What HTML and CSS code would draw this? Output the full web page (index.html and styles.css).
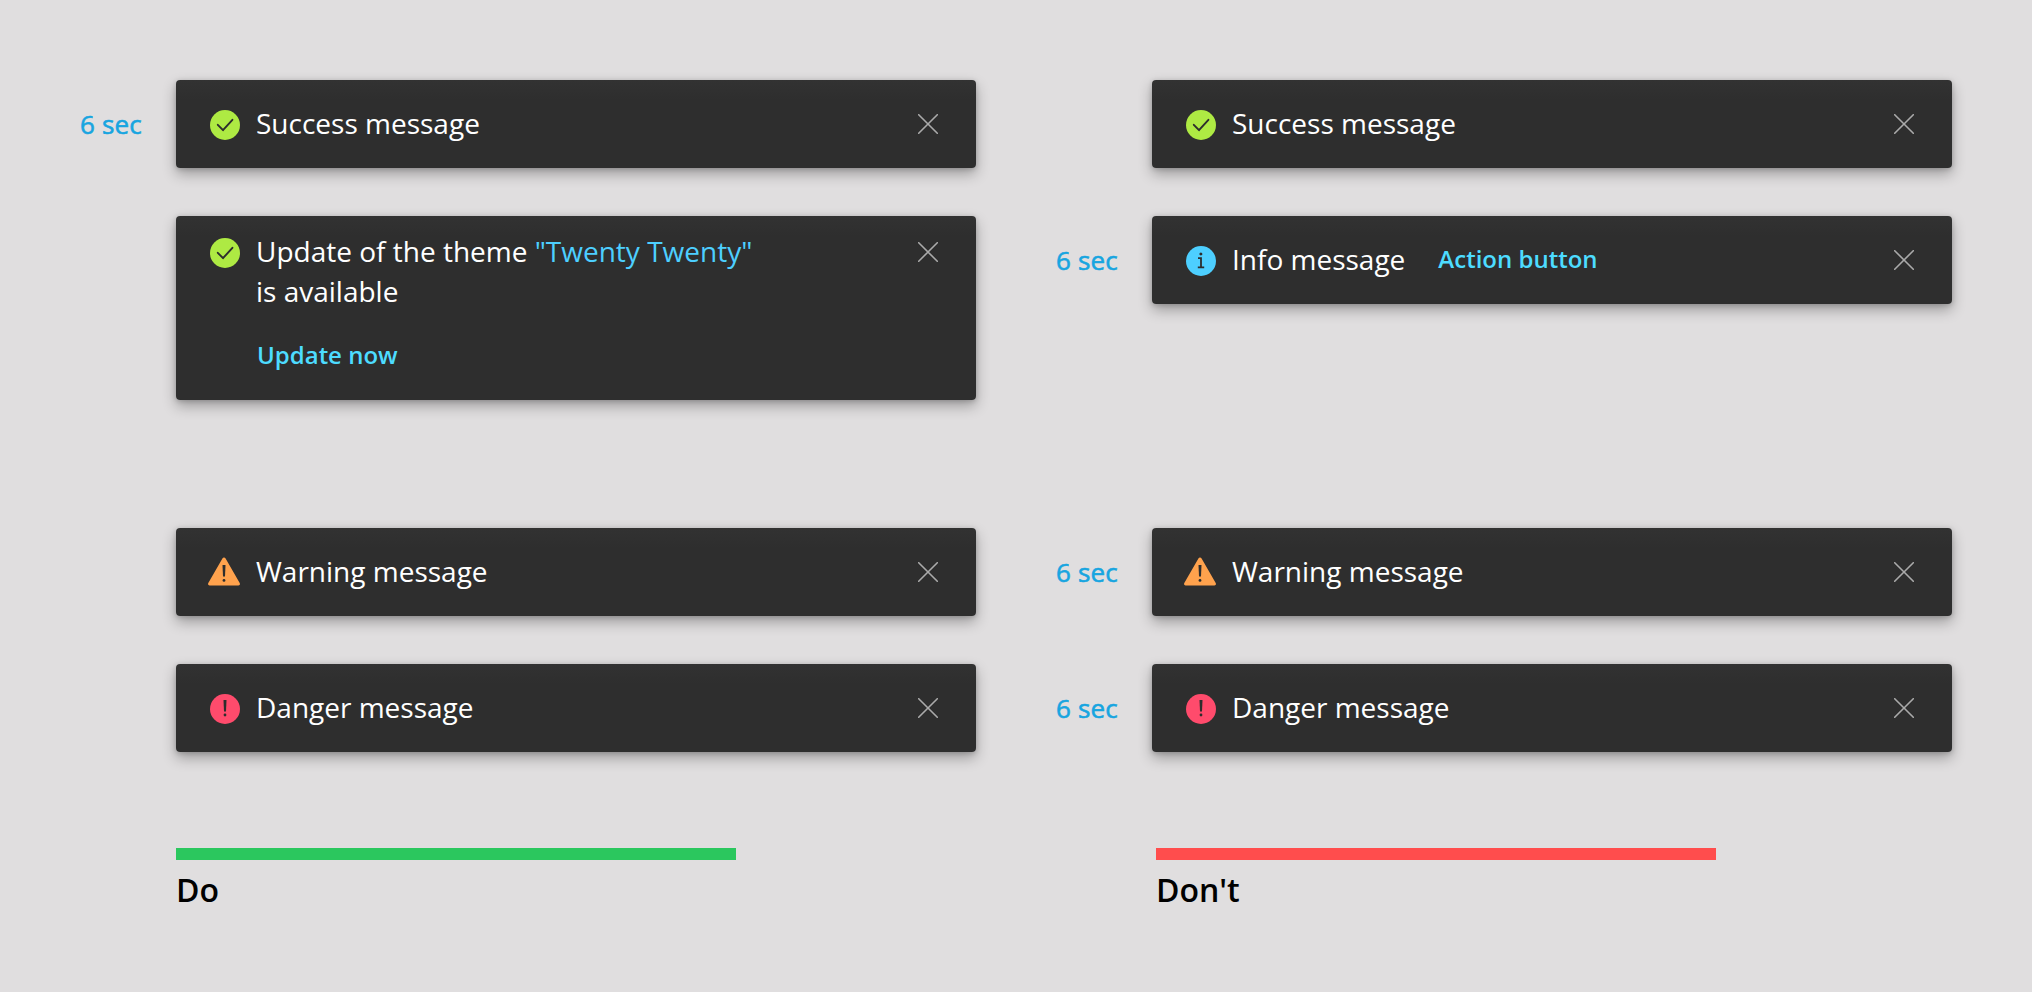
FILE: index.html
```html
<!DOCTYPE html>
<html lang="en">
<head>
<meta charset="utf-8">
<title>Snackbar timing</title>
<link rel="stylesheet" href="styles.css">
</head>
<body>
<svg class="sprite" aria-hidden="true">
  <symbol id="success" viewBox="0 0 32 32"><circle cx="17" cy="17" r="15" fill="#aeea43"/><path d="M9.8 16.8 15 22.2 24.4 11.8" fill="none" stroke="#2d2d2d" stroke-width="1.9" stroke-linecap="round" stroke-linejoin="round"/></symbol>
  <symbol id="info" viewBox="0 0 32 32"><circle cx="17" cy="17" r="15" fill="#4dcfff"/><circle cx="16.9" cy="9.9" r="1.5" fill="#2d2d2d"/><path d="M14 14.2h3v9.2M13.8 23.4h6.4" fill="none" stroke="#2d2d2d" stroke-width="1.8"/></symbol>
  <symbol id="warning" viewBox="0 0 32 32"><path d="M14.4 2.4a1.9 1.9 0 0 1 3.2 0l14.1 24.7a1.6 1.6 0 0 1-1.4 2.4H1.7a1.6 1.6 0 0 1-1.4-2.4z" fill="#ffa24d"/><path d="M14.5 9h3l-.5 11.5h-2z" fill="#2d2d2d"/><circle cx="16" cy="24.4" r="1.4" fill="#2d2d2d"/></symbol>
  <symbol id="danger" viewBox="0 0 32 32"><circle cx="17" cy="17" r="15" fill="#ff4b6c"/><path d="M15.5 8h3L18 19.5h-2z" fill="#2d2d2d"/><circle cx="17" cy="23" r="1.4" fill="#2d2d2d"/></symbol>
  <symbol id="close" viewBox="0 0 20 20"><path d="M.7.7l18.6 18.6M19.3.7.7 19.3" fill="none" stroke="#aaa" stroke-width="1.6" stroke-linecap="round"/></symbol>
</svg>
<main class="board">
  <section class="column">
    <div class="row">
      <span class="time">6 sec</span>
      <div class="card"><svg class="icon"><use href="#success"/></svg><p class="message">Success message</p><svg class="close"><use href="#close"/></svg></div>
    </div>
    <div class="row row-last">
      <div class="card card-tall"><svg class="icon"><use href="#success"/></svg>
        <div class="content"><p class="message">Update of the theme <a class="link">"Twenty Twenty"</a><br>is available</p><a class="action">Update now</a></div>
        <svg class="close"><use href="#close"/></svg></div>
    </div>
    <div class="row">
      <div class="card"><svg class="icon"><use href="#warning"/></svg><p class="message">Warning message</p><svg class="close"><use href="#close"/></svg></div>
    </div>
    <div class="row">
      <div class="card"><svg class="icon"><use href="#danger"/></svg><p class="message">Danger message</p><svg class="close"><use href="#close"/></svg></div>
    </div>
    <div class="verdict verdict-do"><h2 class="verdict-title">Do</h2></div>
  </section>
  <section class="column">
    <div class="row">
      <div class="card"><svg class="icon"><use href="#success"/></svg><p class="message">Success message</p><svg class="close"><use href="#close"/></svg></div>
    </div>
    <div class="row row-last">
      <span class="time">6 sec</span>
      <div class="card"><svg class="icon"><use href="#info"/></svg><p class="message">Info message</p><a class="action action-inline">Action button</a><svg class="close"><use href="#close"/></svg></div>
    </div>
    <div class="row">
      <span class="time">6 sec</span>
      <div class="card"><svg class="icon"><use href="#warning"/></svg><p class="message">Warning message</p><svg class="close"><use href="#close"/></svg></div>
    </div>
    <div class="row">
      <span class="time">6 sec</span>
      <div class="card"><svg class="icon"><use href="#danger"/></svg><p class="message">Danger message</p><svg class="close"><use href="#close"/></svg></div>
    </div>
    <div class="verdict verdict-dont"><h2 class="verdict-title">Don't</h2></div>
  </section>
</main>
</body>
</html>
```

FILE: styles.css
```css
* { box-sizing: border-box; }
body {
  margin: 0;
  background: #e0dedf;
  font-family: "Open Sans", "Noto Sans", sans-serif;
}
p, h2 { margin: 0; }
.sprite { display: none; }
.board {
  display: grid;
  grid-template-columns: 976px 976px;
  height: 992px;
  padding-top: 80px;
}
.row {
  display: grid;
  grid-template-columns: 176px 800px;
  align-items: start;
  margin-bottom: 48px;
}
.row-last { height: 184px; margin-bottom: 128px; }
.time {
  height: 88px;
  padding-right: 34px;
  color: #18a5e0;
  font-size: 26px;
  letter-spacing: .2px;
  line-height: 88px;
  text-align: right;
  -webkit-text-stroke: .6px #18a5e0;
}
.card {
  grid-column: 2;
  display: flex;
  align-items: flex-start;
  height: 88px;
  padding: 23px 38px 0 32px;
  border-radius: 4px;
  background: linear-gradient(#323232, #2e2e2e 20px);
  box-shadow: 0 6px 14px rgba(0, 0, 0, .3), 0 1px 5px rgba(0, 0, 0, .18);
}
.card-tall { height: 184px; padding-top: 15px; }
.icon { flex: none; width: 32px; height: 32px; margin: 5px 16px 0 0; overflow: visible; }
.message {
  color: #fff;
  font-size: 28px;
  line-height: 40px;
  white-space: nowrap;
}
.link { color: #4dcfff; }
.action {
  display: block;
  color: #4ddcff;
  font-size: 24px;
  font-weight: 600;
  line-height: 40px;
}
.content .action { margin: 24px 0 0 1px; }
.action-inline { margin-left: 33px; }
.close { flex: none; width: 20px; height: 20px; margin: 11px 0 0 auto; }
.verdict {
  width: 560px;
  margin: 96px 0 0 176px;
  border-top: 12px solid #2bc75e;
}
.verdict-dont { margin-left: 180px; border-color: #ff4d4d; }
.verdict-title {
  padding-top: 8px;
  color: #000;
  font-size: 32px;
  font-weight: 600;
  line-height: 44px;
}
```
